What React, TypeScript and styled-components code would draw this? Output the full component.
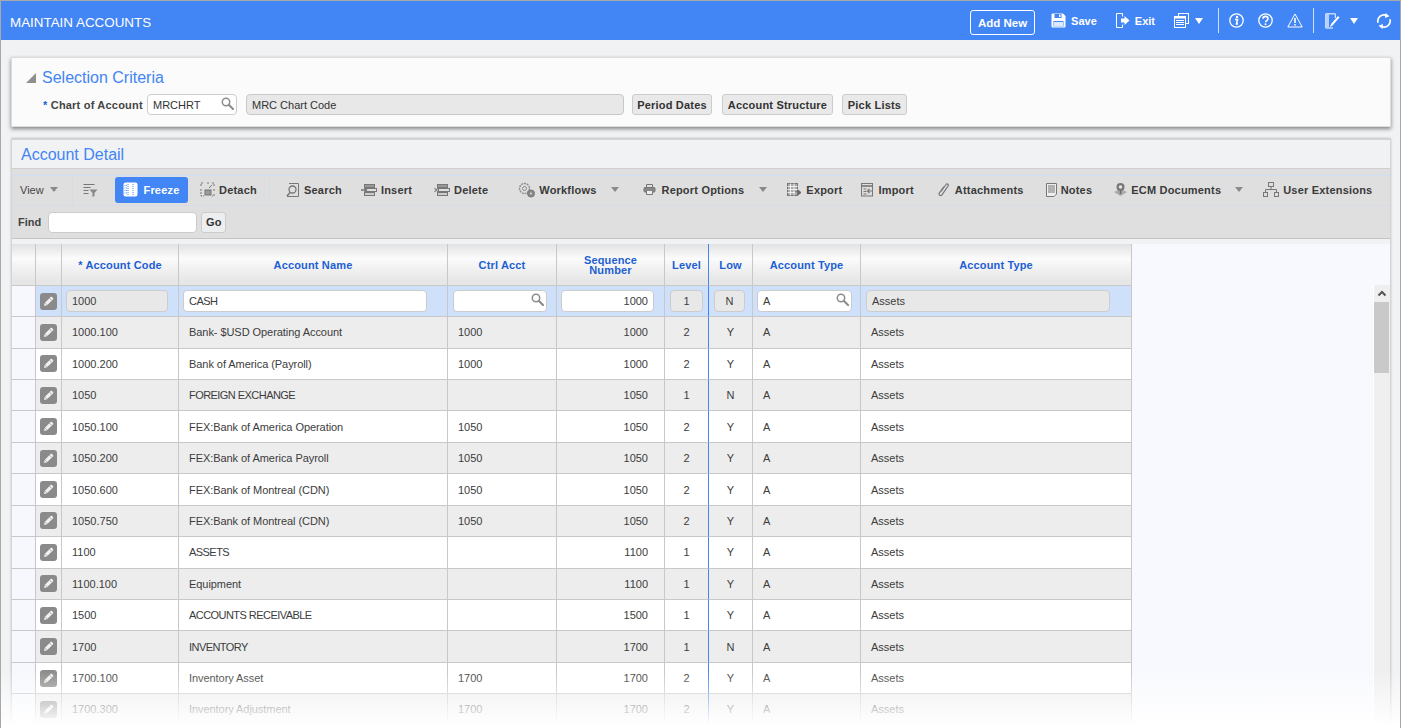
import React from "react";
import styled, { createGlobalStyle } from "styled-components";

const GlobalStyle = createGlobalStyle`
  html, body {
    margin: 0;
    padding: 0;
    height: 728px;
    overflow: hidden;
    background: #f1f2f4;
    font-family: "Liberation Sans", Arial, sans-serif;
  }
`;

const BLUE = "#4285f4";

type RowData = {
  code: string;
  name: string;
  ctrl: string;
  seq: string;
  level: string;
  low: string;
};

const rows: RowData[] = [
  { code: "1000.100", name: "Bank- $USD Operating Account", ctrl: "1000", seq: "1000", level: "2", low: "Y" },
  { code: "1000.200", name: "Bank of America (Payroll)", ctrl: "1000", seq: "1000", level: "2", low: "Y" },
  { code: "1050", name: "FOREIGN EXCHANGE", ctrl: "", seq: "1050", level: "1", low: "N" },
  { code: "1050.100", name: "FEX:Bank of America Operation", ctrl: "1050", seq: "1050", level: "2", low: "Y" },
  { code: "1050.200", name: "FEX:Bank of America Payroll", ctrl: "1050", seq: "1050", level: "2", low: "Y" },
  { code: "1050.600", name: "FEX:Bank of Montreal (CDN)", ctrl: "1050", seq: "1050", level: "2", low: "Y" },
  { code: "1050.750", name: "FEX:Bank of Montreal (CDN)", ctrl: "1050", seq: "1050", level: "2", low: "Y" },
  { code: "1100", name: "ASSETS", ctrl: "", seq: "1100", level: "1", low: "Y" },
  { code: "1100.100", name: "Equipment", ctrl: "", seq: "1100", level: "1", low: "Y" },
  { code: "1500", name: "ACCOUNTS RECEIVABLE", ctrl: "", seq: "1500", level: "1", low: "Y" },
  { code: "1700", name: "INVENTORY", ctrl: "", seq: "1700", level: "1", low: "N" },
  { code: "1700.100", name: "Inventory Asset", ctrl: "1700", seq: "1700", level: "2", low: "Y" },
  { code: "1700.300", name: "Inventory Adjustment", ctrl: "1700", seq: "1700", level: "2", low: "Y" },
];

function Glass({ color = "#8c8c8c" }: { color?: string }) {
  return (
    <svg width="13" height="13" viewBox="0 0 13 13" fill="none">
      <circle cx="5" cy="5" r="3.7" stroke={color} strokeWidth="1.5" fill="#fff" />
      <path d="M8 8l4 4" stroke={color} strokeWidth="2.2" strokeLinecap="round" />
    </svg>
  );
}

function Pencil() {
  return (
    <svg width="13" height="13" viewBox="0 0 13 13">
      <path d="M2 11l.7-3L8.6 2.1c.4-.4 1-.4 1.4 0l1 1c.4.4.4 1 0 1.4L5 10.3z" fill="#f0f0f0" />
      <path d="M3.4 8.2l1.5 1.5M7.600 3.200l2.200 2.200" stroke="#8a8a8a" strokeWidth=".7" />
    </svg>
  );
}

function Icon({ name }: { name: string }) {
  const s = "#777";
  switch (name) {
    case "filter":
      return (
        <svg width="16" height="16" viewBox="0 0 16 16" fill="none" stroke={s}>
          <path d="M1.5 2.5h11M1.5 5.5h7M1.5 8.5h5M1.5 11.5h5" />
          <path d="M7.5 7.5h8l-3 3.5v3l-2 1v-4z" fill="#888" stroke="none" />
        </svg>
      );
    case "freeze":
      return (
        <svg width="15" height="15" viewBox="0 0 15 15">
          <rect x=".5" y=".5" width="14" height="14" rx="2" fill="#fff" />
          <path d="M5 2v11M10 2v11" stroke={BLUE} strokeDasharray="1 1" />
          <path d="M2 3v9M3.5 3v9" stroke={BLUE} strokeDasharray="1 1.5" strokeWidth=".8" />
        </svg>
      );
    case "detach":
      return (
        <svg width="15" height="15" viewBox="0 0 15 15" fill="none" stroke={s}>
          <path d="M1 4V1h3M7 1h2M12 1h2v3M14 7v2M14 12v2h-2M1 7v7h3" strokeDasharray="2 1" />
          <rect x="5" y="8" width="6" height="5" fill="#999" stroke="#777" />
          <path d="M9 6l3-3" />
        </svg>
      );
    case "search":
      return (
        <svg width="15" height="16" viewBox="0 0 15 16" fill="none" stroke={s}>
          <path d="M4 1.5h9.500v13H2" />
          <circle cx="7.500" cy="7.500" r="3.500" strokeWidth="1.300" />
          <path d="M5 10.500l-3 3.500" strokeWidth="1.600" />
        </svg>
      );
    case "insert":
    case "delete":
      return (
        <svg width="16" height="14" viewBox="0 0 16 14" fill="none" stroke={s}>
          <rect x="3.500" y="1.500" width="10" height="3" fill="#999" />
          <rect x="4.500" y="5.500" width="11" height="3" />
          <rect x="3.500" y="9.500" width="10" height="3" fill="#ccc" />
          {name === "insert" ? (
            <path d="M0 7h5M3.500 5l2 2-2 2" strokeWidth="1.400" />
          ) : (
            <path d="M.5 5l3.500 4M4 5L.5 9" strokeWidth="1.100" />
          )}
        </svg>
      );
    case "workflows":
      return (
        <svg width="18" height="16" viewBox="0 0 18 16" fill="none" stroke="#8a8a8a">
          <circle cx="6.500" cy="6.500" r="5" strokeDasharray="2 .8" strokeWidth="1.400" />
          <circle cx="6.500" cy="6.500" r="2" />
          <circle cx="13" cy="11.500" r="3.500" fill="#888" stroke="#777" />
          <circle cx="13" cy="11.500" r="1" fill="#ddd" stroke="none" />
        </svg>
      );
    case "report":
      return (
        <svg width="13" height="13" viewBox="0 0 13 13" fill="none" stroke={s}>
          <path d="M3.500 4V1.500h6V4" />
          <rect x="1" y="4.500" width="11" height="4.500" rx="1" fill="#888" />
          <path d="M3.500 8v3.500h6V8" fill="#eee" />
        </svg>
      );
    case "export":
      return (
        <svg width="15" height="14" viewBox="0 0 15 14" fill="none" stroke={s}>
          <rect x=".5" y=".5" width="10" height="12" fill="#aaa" />
          <path d="M.5 3.500h10M.5 6.500h10M.5 9.500h10M3.500.5v12M7 .5v12" stroke="#eee" />
          <path d="M8 9h4M11 7l3 2.500-3 2.500z" fill="#666" stroke="#666" />
        </svg>
      );
    case "import":
      return (
        <svg width="13" height="14" viewBox="0 0 13 14" fill="none" stroke={s}>
          <rect x=".5" y=".5" width="11" height="12.500" fill="#ddd" />
          <path d="M.5 3h11" strokeWidth="1.600" />
          <path d="M2.500 6h3M2.500 8.500h3M2.500 11h3" />
          <path d="M7 8h4M8.500 6l-2 2 2 2" strokeWidth="1.200" />
        </svg>
      );
    case "attach":
      return (
        <svg width="12" height="15" viewBox="0 0 12 15" fill="none" stroke={s} strokeWidth="1.200">
          <path d="M3 9.500l5-7c.8-1.200 3-.2 2.200 1.300L4 12.800c-1.200 1.500-3.700.3-2.700-1.700L6 4.500" />
        </svg>
      );
    case "notes":
      return (
        <svg width="11" height="14" viewBox="0 0 11 14" fill="none" stroke={s}>
          <path d="M.5.5h10v10.500l-2.500 2.500H.5z" fill="#eee" />
          <path d="M2 3h7M2 5h7M2 7h7M2 9h7" />
        </svg>
      );
    case "ecm":
      return (
        <svg width="15" height="15" viewBox="0 0 15 15">
          <path d="M1 10l6.500-3 6.500 3-6.500 4z" fill="#aaa" />
          <circle cx="7.500" cy="5" r="4" fill="#777" />
          <circle cx="7.500" cy="5" r="1.800" fill="#e5e5e5" />
          <path d="M7.500 9v3" stroke="#666" strokeWidth="1.500" />
        </svg>
      );
    case "tree":
      return (
        <svg width="16" height="15" viewBox="0 0 16 15" fill="none" stroke={s}>
          <rect x="5.500" y=".5" width="5" height="4" />
          <path d="M8 4.500v3M2.500 10V7.500h11V10" />
          <rect x=".5" y="10.500" width="4" height="4" />
          <rect x="11.500" y="10.500" width="4" height="4" />
        </svg>
      );
    default:
      return null;
  }
}

function HeaderGlyph({ name }: { name: string }) {
  const w = "#fff";
  switch (name) {
    case "save":
      return (
        <svg width="15" height="15" viewBox="0 0 15 15">
          <path d="M.5 1.500a1 1 0 011-1H12l2.500 2.500v10.500a1 1 0 01-1 1h-12a1 1 0 01-1-1z" fill={w} />
          <rect x="3.500" y="1" width="7" height="4" fill={BLUE} />
          <rect x="8" y="1.500" width="1.500" height="2.500" fill={w} />
          <rect x="2.500" y="8" width="10" height="5.500" fill={BLUE} />
          <rect x="3" y="9" width="9" height="4.500" fill="#dce8fd" />
        </svg>
      );
    case "exit":
      return (
        <svg width="14" height="15" viewBox="0 0 14 15" fill="none" stroke={w}>
          <path d="M6.500 3.500V.5H.5v14h6v-3" />
          <path d="M5 5.500h3.500V3l5 4.500-5 4.500V9.500H5z" fill={w} stroke="none" />
        </svg>
      );
    case "docs":
      return (
        <svg width="15" height="15" viewBox="0 0 15 15" fill="none" stroke={w}>
          <rect x="4.500" y=".5" width="10" height="10" />
          <rect x=".5" y="3.500" width="11" height="11" fill={BLUE} />
          <path d="M.5 4.500h11" strokeWidth="2" />
          <path d="M2 7.500h8M2 9.500h8M2 11.500h8" />
        </svg>
      );
    case "info":
      return (
        <svg width="15" height="15" viewBox="0 0 15 15" fill="none" stroke={w}>
          <circle cx="7.500" cy="7.500" r="6.700" strokeWidth="1.300" />
          <circle cx="8" cy="4" r="1.200" fill={w} stroke="none" />
          <path d="M6 6.500h2.500L7.500 11H9" strokeWidth="1.600" />
        </svg>
      );
    case "help":
      return (
        <svg width="15" height="15" viewBox="0 0 15 15" fill="none" stroke={w}>
          <circle cx="7.500" cy="7.500" r="6.700" strokeWidth="1.300" />
          <path d="M5 5.800c0-3.200 5-3.200 5 0 0 1.800-2.500 1.700-2.500 3.400" strokeWidth="1.600" />
          <circle cx="7.500" cy="11.200" r="1" fill={w} stroke="none" />
        </svg>
      );
    case "warn":
      return (
        <svg width="16" height="15" viewBox="0 0 16 15" fill="none" stroke={w}>
          <path d="M8 1L.8 14h14.400z" strokeLinejoin="round" />
          <path d="M8 5v5" strokeWidth="1.600" />
          <circle cx="8" cy="11.800" r=".9" fill={w} stroke="none" />
        </svg>
      );
    case "edit":
      return (
        <svg width="15" height="16" viewBox="0 0 15 16" fill="none" stroke={w}>
          <path d="M8 15H.8V.8h9.500V5" />
          <rect x="1" y="1" width="3" height="13.500" fill="#b8d0fb" stroke="none" />
          <path d="M5 14l1-3 7-8 1.500 1.500-7 8z" fill={w} stroke="none" />
        </svg>
      );
    case "refresh":
      return (
        <svg width="16" height="16" viewBox="0 0 16 16" fill="none" stroke={w} strokeWidth="1.700">
          <path d="M2.100 9.800A6.100 6.100 0 0110.600 2.500" />
          <path d="M13.900 6.200A6.100 6.100 0 015.400 13.500" />
          <path d="M9.500 0l4 3.200-4.500 1.800zM6.500 16l-4-3.200 4.500-1.800z" fill={w} stroke="none" />
        </svg>
      );
    default:
      return null;
  }
}

// hinted capitals in the original are narrower than the stock font metrics
const isCaps = (s: string) => s === s.toUpperCase();

export default function App() {
  return (
    <Page>
      <GlobalStyle />
      <AppBar>
        <AppTitle>MAINTAIN ACCOUNTS</AppTitle>
        <AppActions>
          <AddNew>Add New</AddNew>
          <AppAction $ml={16}>
            <HeaderGlyph name="save" />
            Save
          </AppAction>
          <AppAction $ml={19}>
            <HeaderGlyph name="exit" />
            Exit
          </AppAction>
          <AppAction $ml={19}>
            <HeaderGlyph name="docs" />
            <WhiteCaret $ml={1} />
          </AppAction>
          <AppDivider $ml={15} />
          <AppIcon $ml={10}>
            <HeaderGlyph name="info" />
          </AppIcon>
          <AppIcon $ml={14}>
            <HeaderGlyph name="help" />
          </AppIcon>
          <AppIcon $ml={14}>
            <HeaderGlyph name="warn" />
          </AppIcon>
          <AppDivider $ml={10} />
          <AppAction $ml={11}>
            <HeaderGlyph name="edit" />
            <WhiteCaret $ml={5} />
          </AppAction>
          <AppIcon $ml={18}>
            <HeaderGlyph name="refresh" />
          </AppIcon>
        </AppActions>
      </AppBar>

      <Content>
        <CriteriaPanel>
          <PanelHeading>
            <Collapse />
            <PanelTitle>Selection Criteria</PanelTitle>
          </PanelHeading>
          <CriteriaRow>
            <FieldLabel>
              <Star>*</Star> Chart of Account
            </FieldLabel>
            <Input $width={90}>
              MRCHRT
              <InputIcon>
                <Glass />
              </InputIcon>
            </Input>
            <ReadOnly $width={378} $ml={9}>
              MRC Chart Code
            </ReadOnly>
            <PlainButton $ml={8} $width={80}>
              Period Dates
            </PlainButton>
            <PlainButton $ml={10} $width={111}>
              Account Structure
            </PlainButton>
            <PlainButton $ml={9} $width={65}>
              Pick Lists
            </PlainButton>
          </CriteriaRow>
        </CriteriaPanel>

        <DetailPanel>
          <DetailTitle>Account Detail</DetailTitle>
          <Toolbar>
            <ToolRow>
              <ToolGroup $w={61}>
                <ToolText $light>View</ToolText>
                <GrayCaret $ml={6} />
              </ToolGroup>
              <ToolGroup $w={197} $pl={9}>
                <Icon name="filter" />
                <FreezeButton>
                  <Icon name="freeze" />
                  Freeze
                </FreezeButton>
                <ToolItem $ml={12}>
                  <Icon name="detach" />
                  Detach
                </ToolItem>
              </ToolGroup>
              <ToolGroup $w={0} $pl={15} $grow>
                <ToolItem>
                  <Icon name="search" />
                  Search
                </ToolItem>
                <ToolItem $ml={19}>
                  <Icon name="insert" />
                  Insert
                </ToolItem>
                <ToolItem $ml={22}>
                  <Icon name="delete" />
                  Delete
                </ToolItem>
                <ToolItem $ml={30} $gap={3}>
                  <Icon name="workflows" />
                  Workflows
                  <GrayCaret $ml={12} />
                </ToolItem>
                <ToolItem $ml={24} $gap={5}>
                  <Icon name="report" />
                  Report Options
                  <GrayCaret $ml={10} />
                </ToolItem>
                <ToolItem $ml={20}>
                  <Icon name="export" />
                  Export
                </ToolItem>
                <ToolItem $ml={19}>
                  <Icon name="import" />
                  Import
                </ToolItem>
                <ToolItem $ml={24} $gap={5}>
                  <Icon name="attach" />
                  Attachments
                </ToolItem>
                <ToolItem $ml={22}>
                  <Icon name="notes" />
                  Notes
                </ToolItem>
                <ToolItem $ml={21} $gap={3}>
                  <Icon name="ecm" />
                  ECM Documents
                  <GrayCaret $ml={11} />
                </ToolItem>
                <ToolItem $ml={20}>
                  <Icon name="tree" />
                  User Extensions
                </ToolItem>
              </ToolGroup>
            </ToolRow>
            <FindRow>
              <ToolText>Find</ToolText>
              <Input $width={149} $ml={7} />
              <GoButton>Go</GoButton>
            </FindRow>
          </Toolbar>

          <GridArea>
            <Table>
              <HeadRow>
                <HeadCell />
                <HeadCell />
                <HeadCell>
                  <span>
                    <Star>*</Star> Account Code
                  </span>
                </HeadCell>
                <HeadCell>Account Name</HeadCell>
                <HeadCell>Ctrl Acct</HeadCell>
                <HeadCell>
                  <span>
                    Sequence
                    <br />
                    Number
                  </span>
                </HeadCell>
                <HeadCell $frozen>Level</HeadCell>
                <HeadCell>Low</HeadCell>
                <HeadCell>Account Type</HeadCell>
                <HeadCell>Account Type</HeadCell>
              </HeadRow>

              <DataRow $bg="#cfe0fb">
                <GutterCell />
                <Cell $center>
                  <EditButton>
                    <Pencil />
                  </EditButton>
                </Cell>
                <EditCell $pad="0 10px 0 4px">
                  <CellReadOnly>1000</CellReadOnly>
                </EditCell>
                <EditCell $pad="0 20px 0 4px">
                  <CellInput>
                    <NameText $caps>CASH</NameText>
                  </CellInput>
                </EditCell>
                <EditCell $pad="0 9px 0 5px">
                  <CellInput>
                    <InputIcon>
                      <Glass />
                    </InputIcon>
                  </CellInput>
                </EditCell>
                <EditCell $pad="0 10px 0 4px">
                  <CellInput $right>1000</CellInput>
                </EditCell>
                <EditCell $pad="0 5px 0 5px" $frozen>
                  <CellReadOnly $center>1</CellReadOnly>
                </EditCell>
                <EditCell $pad="0 7px 0 5px">
                  <CellReadOnly $center>N</CellReadOnly>
                </EditCell>
                <EditCell $pad="0 8px 0 4px">
                  <CellInput>
                    A
                    <InputIcon>
                      <Glass />
                    </InputIcon>
                  </CellInput>
                </EditCell>
                <EditCell $pad="0 21px 0 5px">
                  <CellReadOnly>Assets</CellReadOnly>
                </EditCell>
              </DataRow>

              {rows.map((r, i) => (
                <DataRow key={r.code} $bg={i % 2 === 0 ? "#ededed" : "#fff"}>
                  <GutterCell />
                  <Cell $center>
                    <EditButton>
                      <Pencil />
                    </EditButton>
                  </Cell>
                  <Cell>{r.code}</Cell>
                  <Cell>
                    <NameText $caps={isCaps(r.name)}>{r.name}</NameText>
                  </Cell>
                  <Cell>{r.ctrl}</Cell>
                  <Cell $right>{r.seq}</Cell>
                  <Cell $center $frozen>
                    {r.level}
                  </Cell>
                  <Cell $center>{r.low}</Cell>
                  <Cell>A</Cell>
                  <Cell>Assets</Cell>
                </DataRow>
              ))}
            </Table>
            <ScrollColumn>
              <ScrollBar>
                <ScrollUp>
                  <svg width="10" height="7" viewBox="0 0 10 7" fill="none" stroke="#555" strokeWidth="2">
                    <path d="M1.500 5.500L5 2l3.500 3.500" />
                  </svg>
                </ScrollUp>
                <ScrollThumb />
              </ScrollBar>
            </ScrollColumn>
          </GridArea>
        </DetailPanel>
      </Content>
      <BottomFade />
    </Page>
  );
}

const Page = styled.div`
  position: relative;
  height: 728px;
  overflow: hidden;
  box-sizing: border-box;
  border: 1px solid #a8a8a8;
  border-bottom: 0;
  color: #333;
  font-size: 11px;
`;

const AppBar = styled.header`
  height: 39px;
  background: ${BLUE};
  display: flex;
  align-items: center;
  justify-content: space-between;
  color: #fff;
`;

const AppTitle = styled.div`
  margin: 3px 0 0 9px;
  font-size: 13.4px;
`;

const AppActions = styled.div`
  display: flex;
  align-items: center;
  padding-right: 8px;
`;

const AddNew = styled.button`
  width: 65px;
  height: 25px;
  padding: 1px 0 0;
  margin-top: 3px;
  box-sizing: border-box;
  background: transparent;
  border: 1px solid #fff;
  border-radius: 3px;
  color: #fff;
  font: bold 11.5px "Liberation Sans", Arial, sans-serif;
`;

const AppAction = styled.div<{ $ml: number }>`
  margin-left: ${(p) => p.$ml}px;
  display: flex;
  align-items: center;
  gap: 5px;
  font-weight: bold;
  font-size: 11px;
`;

const AppIcon = styled.div<{ $ml: number }>`
  margin-left: ${(p) => p.$ml}px;
  display: flex;
`;

const AppDivider = styled.div<{ $ml: number }>`
  margin-left: ${(p) => p.$ml}px;
  width: 1px;
  height: 25px;
  background: #cfe0fb;
`;

const WhiteCaret = styled.span<{ $ml?: number }>`
  margin-left: ${(p) => p.$ml ?? 0}px;
  border-left: 4.5px solid transparent;
  border-right: 4.5px solid transparent;
  border-top: 6px solid #fff;
`;

const Content = styled.main`
  padding: 17px 9px 0 10px;
`;

const CriteriaPanel = styled.section`
  height: 70px;
  box-sizing: border-box;
  background: #fbfbfb;
  border: 1px solid #dcdcdc;
  box-shadow: 0 2px 4px rgba(0, 0, 0, 0.45);
  padding: 10px 0 0 14px;
`;

const PanelHeading = styled.div`
  display: flex;
  align-items: center;
  gap: 6px;
  height: 20px;
`;

const Collapse = styled.span`
  width: 0;
  height: 0;
  border-left: 10px solid transparent;
  border-bottom: 10px solid #8f8f8f;
`;

const PanelTitle = styled.h2`
  margin: 0;
  font-size: 16px;
  font-weight: normal;
  color: ${BLUE};
`;

const CriteriaRow = styled.div`
  display: flex;
  align-items: center;
  margin-top: 6px;
  padding-left: 17px;
`;

const FieldLabel = styled.label`
  font-weight: bold;
  color: #444;
  width: 104px;
  white-space: nowrap;
  letter-spacing: 0.2px;
`;

const Star = styled.span`
  color: #1c5fd4;
  font-weight: bold;
`;

const Input = styled.div<{ $width: number; $ml?: number }>`
  position: relative;
  width: ${(p) => p.$width}px;
  margin-left: ${(p) => p.$ml ?? 0}px;
  height: 21px;
  line-height: 20px;
  box-sizing: border-box;
  padding-left: 5px;
  background: #fff;
  border: 1px solid #ccc;
  border-radius: 4px;
  color: #333;
`;

const InputIcon = styled.span`
  position: absolute;
  right: 2px;
  top: 2px;
  display: flex;
`;

const ReadOnly = styled.div<{ $width: number; $ml?: number }>`
  width: ${(p) => p.$width}px;
  margin-left: ${(p) => p.$ml ?? 0}px;
  height: 21px;
  line-height: 20px;
  box-sizing: border-box;
  padding-left: 5px;
  background: #e8e8e8;
  border: 1px solid #c8c8c8;
  border-radius: 4px;
`;

const PlainButton = styled.button<{ $ml: number; $width: number }>`
  margin-left: ${(p) => p.$ml}px;
  width: ${(p) => p.$width}px;
  height: 21px;
  padding: 0;
  background: #e9e9e9;
  border: 1px solid #ccc;
  border-radius: 3px;
  color: #333;
  letter-spacing: 0.2px;
  font: bold 11px "Liberation Sans", Arial, sans-serif;
`;

const DetailPanel = styled.section`
  margin-top: 12px;
  background: #f1f2f4;
  border: 1px solid #d4d4d4;
  box-shadow: 0 -1px 2px rgba(0, 0, 0, 0.2);
`;

const DetailTitle = styled.h2`
  margin: 0;
  height: 29px;
  line-height: 30px;
  padding-left: 9px;
  font-size: 16px;
  font-weight: normal;
  color: ${BLUE};
  border-bottom: 1px solid #cfcfcf;
  box-sizing: border-box;
`;

const Toolbar = styled.div`
  height: 70px;
  box-sizing: border-box;
  background: #dfdfdf;
  padding-top: 6px;
  border-bottom: 1px solid #c4c4c4;
`;

const ToolRow = styled.div`
  display: flex;
  height: 31px;
  border-top: 1px solid #cfdff5;
  border-bottom: 1px solid #d7dde6;
  box-sizing: border-box;
`;

const ToolGroup = styled.div<{ $w: number; $pl?: number; $grow?: boolean }>`
  display: flex;
  align-items: center;
  box-sizing: border-box;
  flex: ${(p) => (p.$grow ? "1" : `0 0 ${p.$w}px`)};
  padding: 0 0 2px ${(p) => p.$pl ?? 8}px;
  border-right: ${(p) => (p.$grow ? "0" : "1px solid #d7dde6")};
  white-space: nowrap;
`;

const ToolText = styled.span<{ $light?: boolean }>`
  color: #444;
  font-weight: ${(p) => (p.$light ? "normal" : "bold")};
`;

const GrayCaret = styled.span<{ $ml?: number }>`
  margin-left: ${(p) => p.$ml ?? 0}px;
  border-left: 4px solid transparent;
  border-right: 4px solid transparent;
  border-top: 5px solid #8a8a8a;
`;

const ToolItem = styled.div<{ $ml?: number; $gap?: number }>`
  margin-left: ${(p) => p.$ml ?? 0}px;
  display: flex;
  align-items: center;
  gap: ${(p) => p.$gap ?? 4}px;
  font-weight: bold;
  color: #3a3a3a;
  letter-spacing: 0.2px;
`;

const FreezeButton = styled.button`
  margin-left: 17px;
  width: 73px;
  height: 26px;
  display: flex;
  align-items: center;
  justify-content: center;
  gap: 5px;
  padding: 0;
  background: ${BLUE};
  border: 0;
  border-radius: 3px;
  color: #fff;
  font: bold 11px "Liberation Sans", Arial, sans-serif;
  letter-spacing: 0.2px;
`;

const FindRow = styled.div`
  display: flex;
  align-items: center;
  height: 32px;
  padding-left: 6px;
`;

const GoButton = styled.button`
  margin-left: 4px;
  width: 25px;
  height: 21px;
  padding: 0;
  background: #eceef0;
  border: 1px solid #ccc;
  border-radius: 3px;
  color: #333;
  font: bold 11px "Liberation Sans", Arial, sans-serif;
`;

const GridArea = styled.div`
  display: flex;
  margin-top: 5px;
  background: #f8f9fe;
`;

const Table = styled.div`
  flex: 0 0 1120px;
`;

const columns = "24px 26px 117px 269px 109px 108px 44px 44px 108px 271px";

const HeadRow = styled.div`
  display: grid;
  grid-template-columns: ${columns};
  height: 41.8px;
`;

const HeadCell = styled.div<{ $frozen?: boolean }>`
  display: flex;
  align-items: center;
  justify-content: center;
  text-align: center;
  line-height: 10px;
  box-sizing: border-box;
  padding-top: 2px;
  background: linear-gradient(#e2e2e2 0%, #fbfbfb 35%, #e6e6e6 90%);
  border-right: 1px solid ${(p) => (p.$frozen ? BLUE : "#c8c8c8")};
  border-bottom: 1px solid #c8c8c8;
  color: #1c5fd4;
  font-weight: bold;
  letter-spacing: 0.15px;
`;

const DataRow = styled.div<{ $bg: string }>`
  display: grid;
  grid-template-columns: ${columns};
  height: 31.43px;
  background: ${(p) => p.$bg};
`;

const Cell = styled.div<{ $center?: boolean; $right?: boolean; $frozen?: boolean }>`
  display: flex;
  align-items: center;
  justify-content: ${(p) => (p.$center ? "center" : p.$right ? "flex-end" : "flex-start")};
  box-sizing: border-box;
  padding: ${(p) => (p.$center ? "0" : p.$right ? "0 16px 0 0" : "0 0 0 10px")};
  border-right: 1px solid ${(p) => (p.$frozen ? BLUE : "#c8c8c8")};
  border-bottom: 1px solid #c8c8c8;
  color: #3c3c3c;
  min-width: 0;
`;

const GutterCell = styled(Cell)`
  background: #f6f8fd;
`;

const EditCell = styled(Cell)<{ $pad: string }>`
  padding: ${(p) => p.$pad};
`;

const NameText = styled.span<{ $caps?: boolean }>`
  letter-spacing: ${(p) => (p.$caps ? "-0.55px" : "-0.06px")};
  white-space: nowrap;
`;

const CellField = styled.div<{ $center?: boolean; $right?: boolean }>`
  position: relative;
  width: 100%;
  height: 22px;
  line-height: 20px;
  box-sizing: border-box;
  padding: 0 5px;
  border: 1px solid #ccc;
  border-radius: 4px;
  text-align: ${(p) => (p.$center ? "center" : p.$right ? "right" : "left")};
`;

const CellInput = styled(CellField)`
  background: #fff;
`;

const CellReadOnly = styled(CellField)`
  background: #e8e8e8;
`;

const EditButton = styled.span`
  width: 17px;
  height: 17px;
  display: flex;
  align-items: center;
  justify-content: center;
  background: #8a8a8a;
  border-radius: 3px;
`;

const ScrollColumn = styled.div`
  flex: 1;
  display: flex;
  justify-content: flex-end;
  padding-top: 41px;
`;

const ScrollBar = styled.div`
  width: 16px;
  background: #efefef;
  border-left: 1px solid #fff;
`;

const ScrollUp = styled.div`
  height: 17px;
  display: flex;
  align-items: center;
  justify-content: center;
`;

const ScrollThumb = styled.div`
  width: 15px;
  height: 71px;
  background: #c9c9c9;
`;

const BottomFade = styled.div`
  position: absolute;
  left: 0;
  right: 0;
  bottom: 0;
  height: 58px;
  background: linear-gradient(rgba(255, 255, 255, 0), #fff 95%);
  pointer-events: none;
`;
